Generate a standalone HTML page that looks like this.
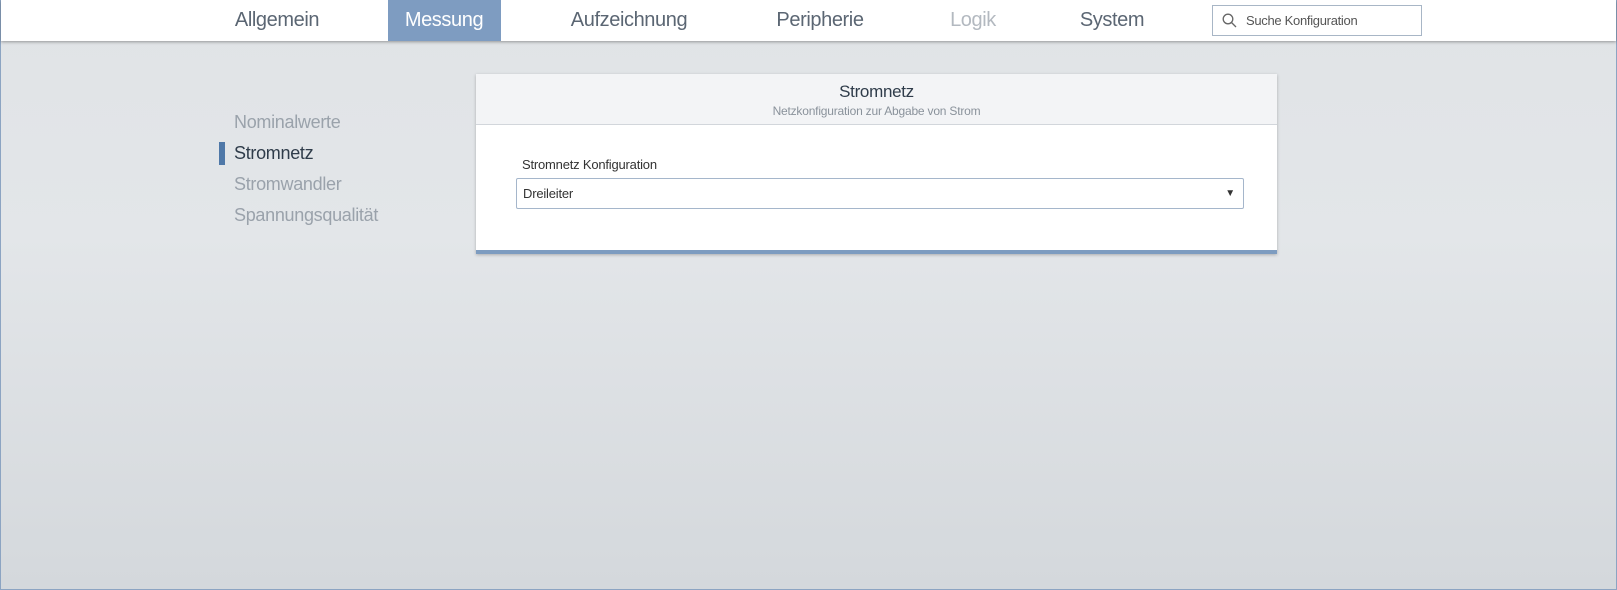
<!DOCTYPE html>
<html><head><meta charset="utf-8"><style>
*{margin:0;padding:0;box-sizing:border-box}
body{width:1617px;height:590px;overflow:hidden;font-family:"Liberation Sans",sans-serif;background:linear-gradient(#e0e3e6,#e3e6e9 40%,#d4d8dc);position:relative;border:1px solid #8ca4c2;border-top:none}
.hdr{position:absolute;left:0;top:0;width:1615px;height:41px;background:#fff;box-shadow:0 1px 3px rgba(0,0,0,.35)}
.t{position:absolute;top:0;height:41px;line-height:41px;font-size:20px;color:#5b6673;letter-spacing:-.4px;transform:translateX(-50%);white-space:nowrap}
.act{position:absolute;left:387px;top:0;width:113px;height:41px;background:#7e9cc1}
.srch{position:absolute;left:1211px;top:5px;width:210px;height:31px;border:1px solid #a8b6c6;background:#fff;font-size:13px;color:#555;line-height:29px;padding-left:33px;letter-spacing:-.3px}
.side{position:absolute;left:233px;font-size:18px;color:#9aa2ab;letter-spacing:-.3px}
.card{position:absolute;left:475px;top:74px;width:801px;height:180px;background:#fff;box-shadow:0 1px 3px rgba(0,0,0,.25);border-bottom:4px solid #7d9cc0}
.ch{height:51px;background:#f3f4f6;border-bottom:1px solid #d2d6db;text-align:center}
</style></head><body>
<div class="hdr">
<div class="act"></div>
<div class="t" style="left:276px">Allgemein</div>
<div class="t" style="left:443px;color:#fff">Messung</div>
<div class="t" style="left:628px">Aufzeichnung</div>
<div class="t" style="left:819px">Peripherie</div>
<div class="t" style="left:972px;color:#b3b9c0">Logik</div>
<div class="t" style="left:1111px">System</div>
<div class="srch"><svg style="position:absolute;left:9px;top:7px" width="15" height="15" viewBox="0 0 15 15"><circle cx="6" cy="6" r="4.8" fill="none" stroke="#666" stroke-width="1.3"/><line x1="9.5" y1="9.5" x2="14" y2="14" stroke="#666" stroke-width="1.3"/></svg>Suche Konfiguration</div>
</div>
<div class="side" style="top:112px">Nominalwerte</div>
<div style="position:absolute;left:218px;top:142px;width:6px;height:23px;background:#4f78a8"></div>
<div class="side" style="top:143px;color:#2f3c4a">Stromnetz</div>
<div class="side" style="top:174px">Stromwandler</div>
<div class="side" style="top:205px">Spannungsqualität</div>
<div class="card">
<div class="ch"><div style="font-size:17px;color:#2f3c4a;padding-top:8px;letter-spacing:-.3px">Stromnetz</div><div style="font-size:12px;color:#8a929b;margin-top:2px;letter-spacing:-.2px">Netzkonfiguration zur Abgabe von Strom</div></div>
<div style="position:absolute;left:46px;top:83px;font-size:13px;color:#333;letter-spacing:-.2px">Stromnetz Konfiguration</div>
<div style="position:absolute;left:40px;top:104px;width:728px;height:31px;border:1px solid #a5b6cb;border-radius:2px;font-size:13px;line-height:29px;padding-left:6px;color:#333;letter-spacing:-.2px">Dreileiter<span style="position:absolute;right:8px;top:0;font-size:10px">▼</span></div>
</div>
</body></html>
